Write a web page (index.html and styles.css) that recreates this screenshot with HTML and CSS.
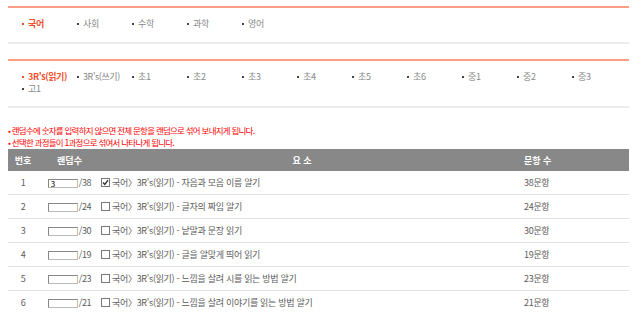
FILE: index.html
```html
<!DOCTYPE html>
<html lang="ko">
<head>
    <meta charset="UTF-8">
    <meta name="viewport" content="width=device-width, initial-scale=1.0">
    <title>랜덤 문항 선택</title>
    <link rel="stylesheet" href="styles.css">
</head>
<body>
    <div class="wrap">
        <ul class="tabs subject-tabs">
            <li class="on">국어</li>
            <li>사회</li>
            <li>수학</li>
            <li>과학</li>
            <li>영어</li>
        </ul>

        <ul class="tabs course-tabs">
            <li class="on">3R's(읽기)</li>
            <li>3R's(쓰기)</li>
            <li>초1</li>
            <li>초2</li>
            <li>초3</li>
            <li>초4</li>
            <li>초5</li>
            <li>초6</li>
            <li>중1</li>
            <li>중2</li>
            <li>중3</li>
            <li>고1</li>
        </ul>

        <ul class="notice">
            <li>랜덤수에 숫자를 입력하지 않으면 전체 문항을 랜덤으로 섞어 보내지게 됩니다.</li>
            <li>선택한 과정들이 1과정으로 섞여서 나타나게 됩니다.</li>
        </ul>

        <table class="item-table">
            <colgroup>
                <col class="col-no">
                <col class="col-rand">
                <col class="col-item">
                <col class="col-count">
            </colgroup>
            <thead>
                <tr>
                    <th>번호</th>
                    <th>랜덤수</th>
                    <th>요 소</th>
                    <th class="left">문항 수</th>
                </tr>
            </thead>
            <tbody>
                <tr>
                    <td>1</td>
                    <td class="rand"><input type="text" value="3">/38</td>
                    <td class="left"><label><input type="checkbox" checked>국어〉3R's(읽기) - 자음과 모음 이름 알기</label></td>
                    <td class="left">38문항</td>
                </tr>
                <tr>
                    <td>2</td>
                    <td class="rand"><input type="text">/24</td>
                    <td class="left"><label><input type="checkbox">국어〉3R's(읽기) - 글자의 짜임 알기</label></td>
                    <td class="left">24문항</td>
                </tr>
                <tr>
                    <td>3</td>
                    <td class="rand"><input type="text">/30</td>
                    <td class="left"><label><input type="checkbox">국어〉3R's(읽기) - 낱말과 문장 읽기</label></td>
                    <td class="left">30문항</td>
                </tr>
                <tr>
                    <td>4</td>
                    <td class="rand"><input type="text">/19</td>
                    <td class="left"><label><input type="checkbox">국어〉3R's(읽기) - 글을 알맞게 띄어 읽기</label></td>
                    <td class="left">19문항</td>
                </tr>
                <tr>
                    <td>5</td>
                    <td class="rand"><input type="text">/23</td>
                    <td class="left"><label><input type="checkbox">국어〉3R's(읽기) - 느낌을 살려 시를 읽는 방법 알기</label></td>
                    <td class="left">23문항</td>
                </tr>
                <tr>
                    <td>6</td>
                    <td class="rand"><input type="text">/21</td>
                    <td class="left"><label><input type="checkbox">국어〉3R's(읽기) - 느낌을 살려 이야기를 읽는 방법 알기</label></td>
                    <td class="left">21문항</td>
                </tr>
            </tbody>
        </table>
    </div>
</body>
</html>
```

FILE: styles.css
```css
body {
    margin: 6px 8px 0;
    font-family: "Noto Sans CJK KR", "Noto Sans", sans-serif;
    font-size: 9px;
    color: #666;
    background-color: #fff;
}

.wrap {
    width: 621px;
}

.tabs {
    list-style: none;
    margin: 0;
    padding: 0 0 0 13px;
    display: flex;
    flex-wrap: wrap;
    border-top: 2px solid #ff9d84;
    border-bottom: 2px solid #ececec;
}

.tabs li {
    position: relative;
    min-width: 55px;
    box-sizing: border-box;
    padding-left: 7px;
    line-height: 12px;
    color: #888;
    letter-spacing: -0.4px;
}

.tabs li::before {
    content: "";
    position: absolute;
    left: 1px;
    top: 5px;
    width: 2px;
    height: 2px;
    background-color: #444;
}

.tabs li.on {
    color: #f0502a;
    font-weight: bold;
}

.tabs li.on::before {
    background-color: #f0502a;
}

.subject-tabs {
    padding-top: 10px;
    padding-bottom: 12px;
}

.course-tabs {
    margin-top: 15px;
    padding-top: 10px;
    padding-bottom: 11px;
}

.notice {
    list-style: none;
    margin: 16px 0 0;
    padding: 0;
    color: #f00;
    font-size: 8.5px;
    line-height: 12px;
    letter-spacing: -0.75px;
}

.notice li::before {
    content: "• ";
}

.item-table {
    width: 621px;
    border-collapse: collapse;
    table-layout: fixed;
    margin-top: 1px;
}

.col-no { width: 30px; }
.col-rand { width: 63px; }
.col-item { width: 402px; }
.col-count { width: 126px; }

.item-table th {
    height: 22px;
    padding: 0;
    background-color: #888;
    color: #fff;
    font-weight: bold;
    text-align: center;
}

.item-table td {
    height: 23px;
    padding: 0;
    text-align: center;
    border-bottom: 1px solid #e3e3e3;
    color: #5c5c5c;
    letter-spacing: -0.3px;
}

.item-table .left {
    text-align: left;
}

.item-table th.left,
.item-table td:last-child {
    padding-left: 21px;
}

.rand input {
    width: 30px;
    height: 9px;
    box-sizing: border-box;
    margin: 0 1px 0 0;
    padding: 0 2px;
    border: 1px solid #888;
    border-right-color: #bbb;
    border-bottom-color: #bbb;
    font-size: 8px;
    font-family: inherit;
    line-height: 7px;
    vertical-align: middle;
}

.item-table label {
    display: inline-flex;
    align-items: center;
}

.item-table input[type="checkbox"] {
    appearance: none;
    width: 9px;
    height: 9px;
    margin: 0 2px 0 0;
    border: 1px solid #777;
    background-color: #fff;
    background-position: center;
    background-repeat: no-repeat;
}

.item-table input[type="checkbox"]:checked {
    background-image: url("data:image/svg+xml,%3Csvg xmlns='http://www.w3.org/2000/svg' viewBox='0 0 7 7'%3E%3Cpath d='M1 3.5 L2.8 5.5 L6 1.2' fill='none' stroke='%23333' stroke-width='1.4'/%3E%3C/svg%3E");
}
```
